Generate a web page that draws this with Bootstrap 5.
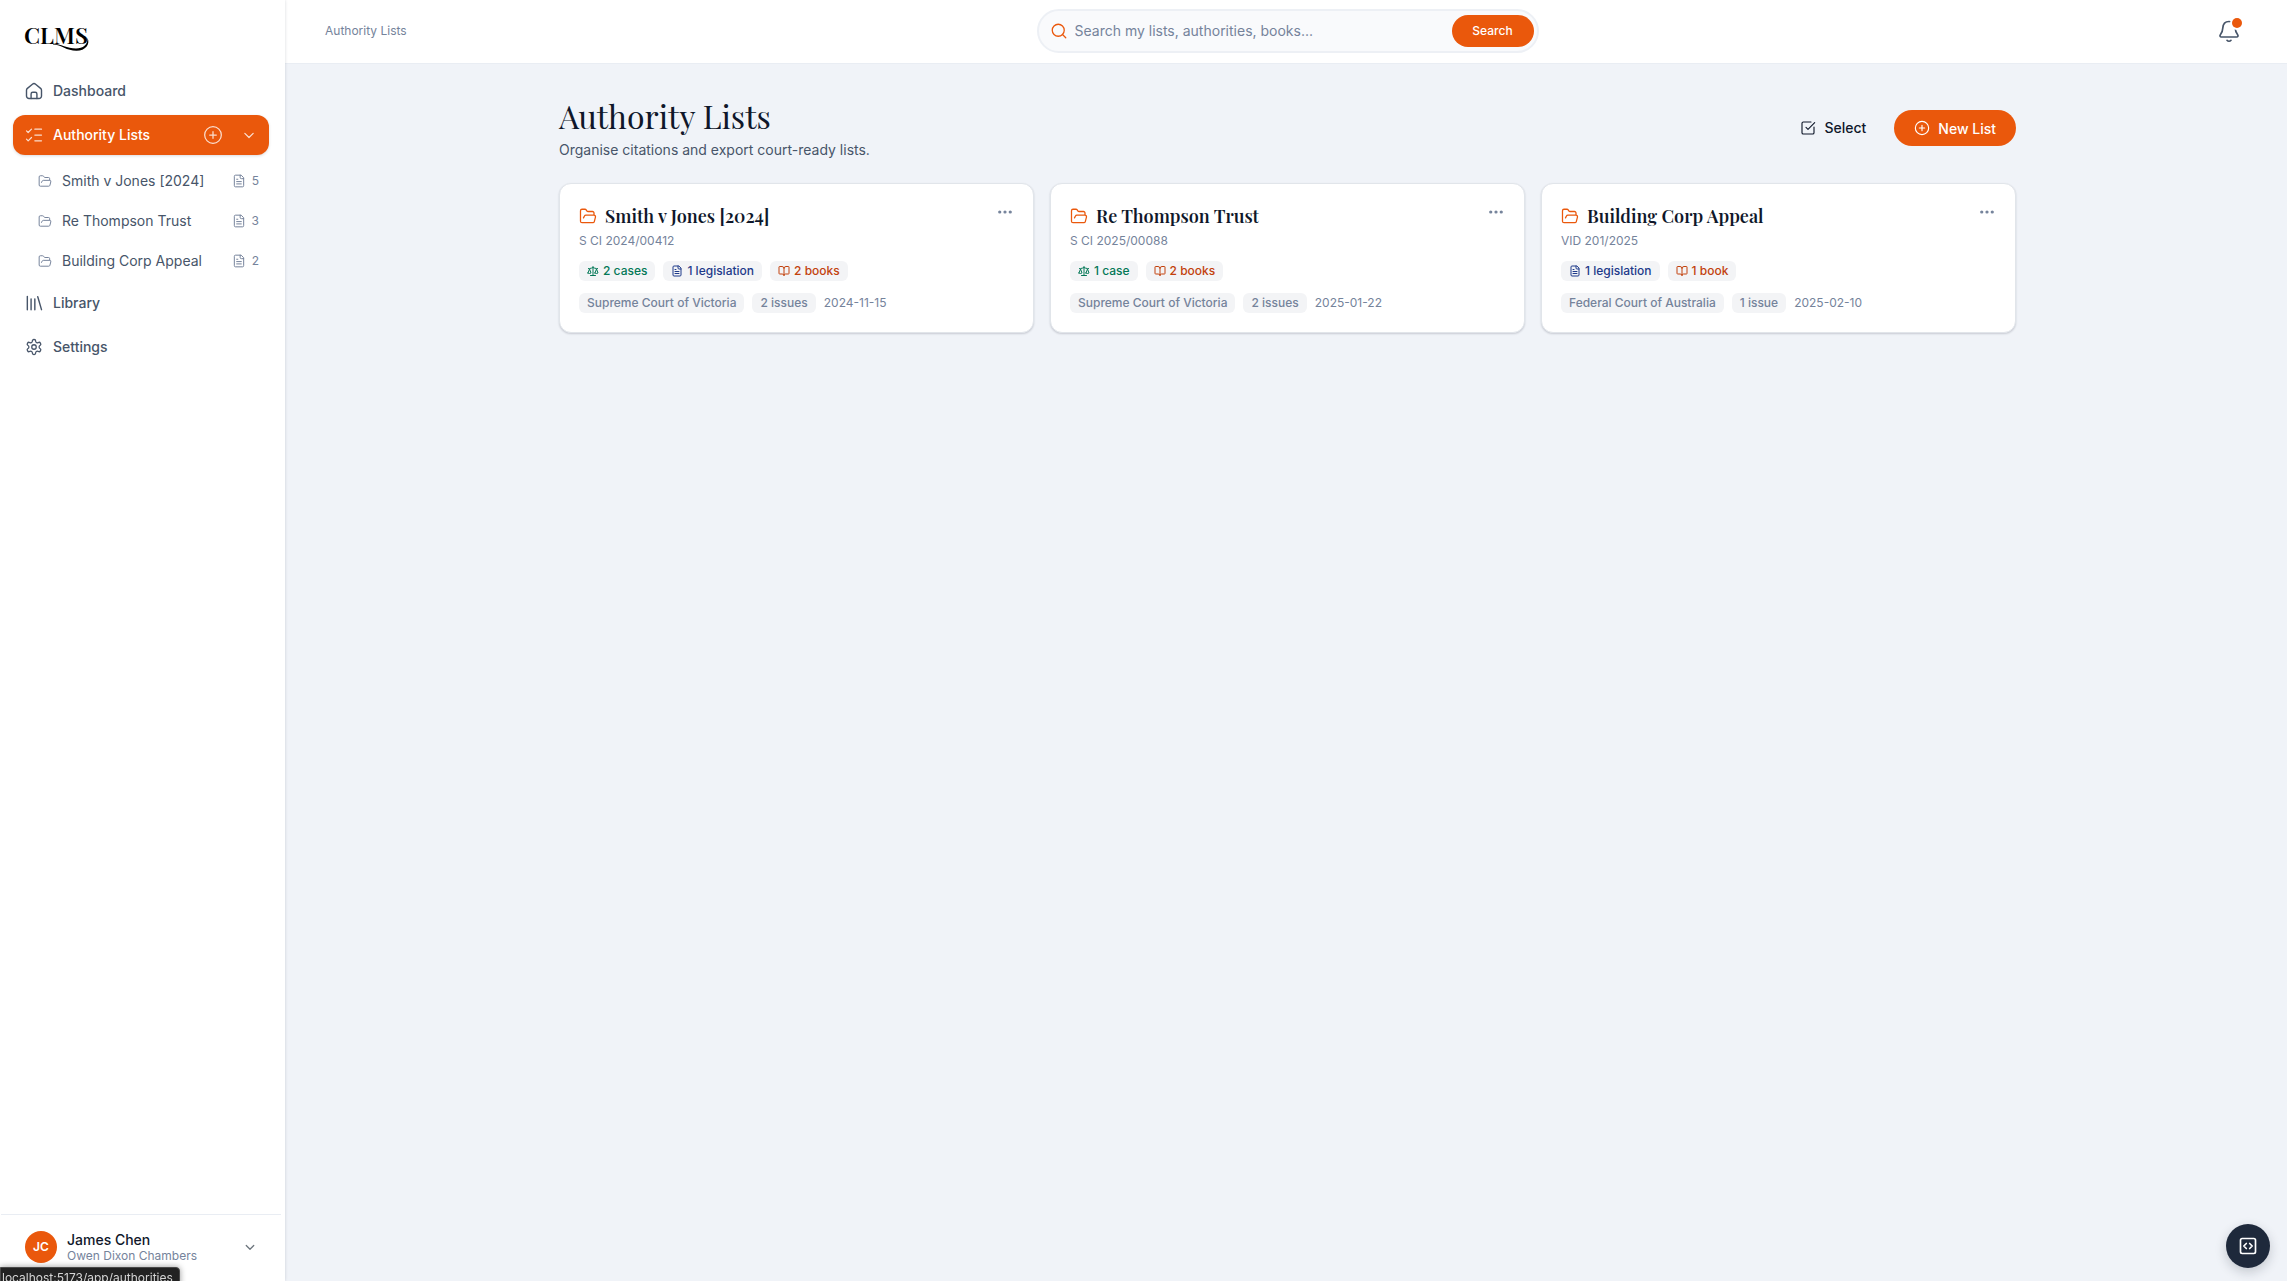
<!DOCTYPE html>
<html lang="en">
<head>
<meta charset="utf-8">
<meta name="viewport" content="width=device-width, initial-scale=1">
<title>Authority Lists</title>
<link href="https://cdn.jsdelivr.net/npm/bootstrap@5.3.0/dist/css/bootstrap.min.css" rel="stylesheet">
<style>
  :root { --brand: #ea580c; --ink: #0f172a; --slate: #475569; --dim: #75839b; --page: #f0f3f8; }
  body { font-family: Inter, "Liberation Sans", sans-serif; font-size: 14px; line-height: 20px; color: var(--ink); background: var(--page); }
  a { text-decoration: none; color: inherit; }
  .ico { width: 20px; height: 20px; fill: none; stroke: currentColor; stroke-width: 1.7; stroke-linecap: round; stroke-linejoin: round; flex: none; display: block; }
  .ico-24 { width: 24px; height: 24px; }
  .ico-18 { width: 18px; height: 18px; }
  .ico-16 { width: 16px; height: 16px; }
  .ico-14 { width: 14px; height: 14px; }
  .ico-cog { margin: 0 1px; }
  .ico-search { color: var(--brand); }
  .plain-btn { border: 0; background: none; padding: 0; color: inherit; }
  .serif { font-family: "Playfair Display", "Liberation Serif", serif; }

  .side { width: 285px; background: #fff; box-shadow: 0 0 3px rgba(15,23,42,.16); z-index: 2; }
  .brand-link { padding: 12px 24px 0; height: 71px; }
  .brand-link svg { overflow: visible; }
  .side-nav { padding: 0 16px 0 13px; gap: 4px; }
  .side-row { height: 40px; padding: 0 10px 0 11px; color: var(--slate); font-weight: 500; border-radius: 12px; }
  .side-row a { gap: 9px; }
  .side-row.is-current { background: var(--brand); color: #fff; box-shadow: 0 1px 3px rgba(15,23,42,.15); }
  .side-row.is-current .ico { opacity: .8; stroke-width: 1.5; }
  .sub-nav { margin-top: 4px; gap: 4px; }
  .sub-row { height: 36px; padding: 0 10px 0 25px; gap: 10px; color: var(--slate); }
  .sub-count { gap: 6px; color: var(--dim); font-size: 12px; }
  .sub-row .ico { color: var(--dim); }
  .account { margin: 0 4px 0 1px; padding: 16px 22px 18px 24px; border-top: 1px solid #e9edf3 !important; gap: 10px; height: 67px; }
  .avatar { width: 32px; height: 32px; background: var(--brand); color: #fff; font-size: 12px; font-weight: 600; }
  .account-name { font-weight: 500; line-height: 18px; }
  .account-org { font-size: 12px; line-height: 14px; color: var(--dim); }

  .top { height: 64px; background: #fff; padding: 0 37px 1px 40px; border-bottom: 1px solid #e9edf3; }
  .top-side { flex: 1 1 0; }
  .crumb { font-size: 12px; color: var(--dim); }
  .search-box { flex: 0 1 502px; height: 44px; border: 2px solid #edf0f5; border-radius: 22px; background: #f9fafc; padding: 0 3px 0 11px; gap: 7px; }
  .search-box input { border: 0; background: none; padding: 0; font-size: 14px; line-height: 20px; color: var(--ink); outline: 0; min-width: 0; }
  .search-box input::placeholder { color: var(--dim); opacity: 1; }
  .btn-brand, .btn-brand:hover { background: var(--brand); color: #fff; border: 0; font-weight: 500; }
  .btn-search { width: 82px; height: 32px; font-size: 12px; padding: 0; }
  .bell-btn { padding: 0 9px; color: var(--slate); }
  .bell-dot { width: 10px; height: 10px; background: var(--brand); top: -1px; right: 8px; box-shadow: 0 0 0 2px #fff; }

  .content { max-width: 1457px; width: 100%; margin: 0 auto; }
  .content-wrap { padding: 32px 24px 0 27px; }
  .page-title { font-size: 32px; line-height: 40px; font-weight: 400; margin: 0; }
  .page-note { color: var(--slate); margin: 4px 0 0; }
  .page-head { margin-bottom: 23px; }
  .btn-new { height: 36px; padding: 0 20px; gap: 8px; font-size: 14px; }
  .btn-pick { height: 36px; gap: 8px; font-weight: 500; margin-right: 28px; }

  .list-grid { --bs-gutter-x: 16px; --bs-gutter-y: 16px; }
  .list-card { border: 1px solid #e1e5ea; border-radius: 12px; padding: 19px; box-shadow: 0 1px 2px rgba(15,23,42,.18); background: #fff; }
  .list-title { font-size: 18px; line-height: 26px; font-weight: 600; margin: 0; }
  .title-row { gap: 8px; color: var(--brand); }
  .title-row a { color: var(--ink); }
  .list-ref { font-size: 12px; line-height: 18px; margin: 3px 0 11px; color: var(--dim); }
  .tag-row { gap: 8px; font-size: 12px; color: var(--dim); }
  .tag { height: 20px; padding: 0 8px; gap: 4px; border-radius: 6px; background: #f3f4f6; font-weight: 500; }
  .tag .ico { width: 12px; height: 12px; stroke-width: 2; }
  .tag-case { color: #047857; }
  .tag-law { color: #1e3a8a; }
  .tag-book { color: #c2410c; }
  .more-btn { top: 19px; right: 19px; color: var(--dim); }

  .dev-fab { right: 17px; bottom: 13px; width: 44px; height: 44px; background: #1e293b; color: #fff; box-shadow: 0 4px 12px rgba(15,23,42,.2); z-index: 5; }
  .dev-fab .ico { stroke-width: 2; }
  .link-status { left: 0; bottom: -6px; height: 20px; padding: 0 6px 0 1px; background: #222; border: 1px solid #4a4a4a; border-radius: 0 4px 0 0; color: #d4d4d4; font-size: 12px; line-height: 19px; box-shadow: 0 0 6px rgba(0,0,0,.4); z-index: 5; }
</style>
</head>
<body>
<svg class="d-none" xmlns="http://www.w3.org/2000/svg">
  <symbol id="i-home" viewBox="0 0 24 24"><path d="M3 11.2a3 3 0 0 1 1.1-2.3l6-5a3 3 0 0 1 3.8 0l6 5a3 3 0 0 1 1.1 2.3V18a3 3 0 0 1-3 3H6a3 3 0 0 1-3-3z"/><path d="M8.500 21v-5.500a2 2 0 0 1 2-2h3a2 2 0 0 1 2 2V21"/></symbol>
  <symbol id="i-checks" viewBox="0 0 24 24"><path d="m3 17 2 2 4-4M3 7l2 2 4-4M13 5h8M13 12h8M13 19h8"/></symbol>
  <symbol id="i-plus" viewBox="0 0 24 24"><circle cx="12" cy="12" r="10"/><path d="M8 12h8M12 8v8"/></symbol>
  <symbol id="i-down" viewBox="0 0 24 24"><path d="m7 10 5 5 5-5"/></symbol>
  <symbol id="i-folder" viewBox="0 0 24 24"><path d="M6 14.500 7.300 12a2 2 0 0 1 1.800-1.100H20a2 2 0 0 1 1.940 2.500l-1.540 6a2 2 0 0 1-1.950 1.500H4a2 2 0 0 1-2-2V5a2 2 0 0 1 2-2h3.900a2 2 0 0 1 1.690.900l.810 1.200a2 2 0 0 0 1.670.900H18a2 2 0 0 1 2 2v2.500"/></symbol>
  <symbol id="i-file" viewBox="0 0 24 24"><path d="M15 2H6a2 2 0 0 0-2 2v16a2 2 0 0 0 2 2h12a2 2 0 0 0 2-2V7z"/><path d="M14 2v4a2 2 0 0 0 2 2h4M10 9H8M16 13H8M16 17H8"/></symbol>
  <symbol id="i-library" viewBox="0 0 24 24"><path d="m16.500 4.500 4.500 15.500M13 7v13M8.500 7v13M4 4v16"/></symbol>
  <symbol id="i-cog" viewBox="0 0 24 24"><path d="M12.220 2h-.440a2 2 0 0 0-2 2v.180a2 2 0 0 1-1 1.730l-.430.250a2 2 0 0 1-2 0l-.150-.080a2 2 0 0 0-2.730.730l-.220.380a2 2 0 0 0 .730 2.730l.150.100a2 2 0 0 1 1 1.720v.510a2 2 0 0 1-1 1.740l-.150.090a2 2 0 0 0-.730 2.730l.220.380a2 2 0 0 0 2.730.730l.150-.080a2 2 0 0 1 2 0l.430.250a2 2 0 0 1 1 1.730V20a2 2 0 0 0 2 2h.440a2 2 0 0 0 2-2v-.180a2 2 0 0 1 1-1.730l.430-.250a2 2 0 0 1 2 0l.150.080a2 2 0 0 0 2.730-.730l.220-.390a2 2 0 0 0-.730-2.730l-.150-.080a2 2 0 0 1-1-1.740v-.500a2 2 0 0 1 1-1.740l.150-.090a2 2 0 0 0 .730-2.730l-.220-.380a2 2 0 0 0-2.730-.730l-.150.080a2 2 0 0 1-2 0l-.430-.250a2 2 0 0 1-1-1.730V4a2 2 0 0 0-2-2z"/><circle cx="12" cy="12" r="3"/></symbol>
  <symbol id="i-search" viewBox="0 0 24 24"><circle cx="11" cy="11" r="8"/><path d="m21 21-4.300-4.300"/></symbol>
  <symbol id="i-bell" viewBox="0 0 24 24"><path d="M12 2.500c-4 0-6 3-6.200 6.500-.2 3.500-.8 4.700-2.300 6.500-1 1.200-.5 2.500.9 2.500h15.200c1.400 0 1.900-1.300.9-2.500-1.500-1.800-2.100-3-2.300-6.500C18 5.500 16 2.500 12 2.500z"/><path d="M10 21.300a2.600 2.600 0 0 0 4 0"/></symbol>
  <symbol id="i-select" viewBox="0 0 24 24"><path d="M21 10.500V19a2 2 0 0 1-2 2H5a2 2 0 0 1-2-2V5a2 2 0 0 1 2-2h11.500"/><path d="m9 11 3 3L22 4"/></symbol>
  <symbol id="i-scale" viewBox="0 0 24 24"><path d="m16 16 3-8 3 8c-.870.650-1.920 1-3 1s-2.130-.350-3-1ZM2 16l3-8 3 8c-.870.650-1.920 1-3 1s-2.130-.350-3-1ZM7 21h10M12 3v18M3 7h2c2 0 5-1 7-2 2 1 5 2 7 2h2"/></symbol>
  <symbol id="i-book" viewBox="0 0 24 24"><path d="M12 7v14M3 18a1 1 0 0 1-1-1V4a1 1 0 0 1 1-1h5a4 4 0 0 1 4 4 4 4 0 0 1 4-4h5a1 1 0 0 1 1 1v13a1 1 0 0 1-1 1h-6a3 3 0 0 0-3 3 3 3 0 0 0-3-3z"/></symbol>
  <symbol id="i-code" viewBox="0 0 24 24"><rect x="3" y="3" width="18" height="18" rx="2"/><path d="m10 9-3 3 3 3M14 15l3-3-3-3"/></symbol>
  <symbol id="i-more" viewBox="0 0 24 24"><g fill="currentColor"><circle cx="5" cy="12" r="1.300"/><circle cx="12" cy="12" r="1.300"/><circle cx="19" cy="12" r="1.300"/></g></symbol>
</svg>

<div class="d-flex min-vh-100">
  <aside class="side d-flex flex-column flex-shrink-0 position-sticky top-0 vh-100">
    <a href="#" class="brand-link d-block" aria-label="CLMS home">
      <svg width="80" height="48" viewBox="0 0 80 48" aria-hidden="true">
        <text class="serif" x="0" y="32" font-size="23" font-weight="600" fill="#000">CLMS</text>
        <path d="M29 31.500c8 .6 14 5 23 5 7 0 12-4 11.500-10.500 3 6-2 12.800-11 12.800-10 0-15-6-23.500-6.300z" fill="#000"/>
      </svg>
    </a>
    <nav class="side-nav d-flex flex-column flex-grow-1" aria-label="Main">
      <div class="side-row d-flex align-items-center"><a href="#" class="d-flex align-items-center flex-grow-1"><svg class="ico"><use href="#i-home"/></svg>Dashboard</a></div>
      <div class="side-row is-current d-flex align-items-center gap-3">
        <a href="#" class="d-flex align-items-center flex-grow-1" aria-current="page"><svg class="ico"><use href="#i-checks"/></svg>Authority Lists</a>
        <button type="button" class="plain-btn" aria-label="Add list"><svg class="ico"><use href="#i-plus"/></svg></button>
        <button type="button" class="plain-btn" aria-label="Collapse"><svg class="ico"><use href="#i-down"/></svg></button>
      </div>
      <div class="sub-nav d-flex flex-column">
        <a href="#" class="sub-row d-flex align-items-center"><svg class="ico ico-14"><use href="#i-folder"/></svg><span class="flex-grow-1">Smith v Jones [2024]</span><span class="sub-count d-flex align-items-center"><svg class="ico ico-14"><use href="#i-file"/></svg>5</span></a>
        <a href="#" class="sub-row d-flex align-items-center"><svg class="ico ico-14"><use href="#i-folder"/></svg><span class="flex-grow-1">Re Thompson Trust</span><span class="sub-count d-flex align-items-center"><svg class="ico ico-14"><use href="#i-file"/></svg>3</span></a>
        <a href="#" class="sub-row d-flex align-items-center"><svg class="ico ico-14"><use href="#i-folder"/></svg><span class="flex-grow-1">Building Corp Appeal</span><span class="sub-count d-flex align-items-center"><svg class="ico ico-14"><use href="#i-file"/></svg>2</span></a>
      </div>
      <div class="side-row d-flex align-items-center"><a href="#" class="d-flex align-items-center flex-grow-1"><svg class="ico"><use href="#i-library"/></svg>Library</a></div>
      <div class="side-row d-flex align-items-center"><a href="#" class="d-flex align-items-center flex-grow-1"><svg class="ico ico-18 ico-cog"><use href="#i-cog"/></svg>Settings</a></div>
    </nav>
    <button type="button" class="account plain-btn d-flex align-items-start text-start">
      <span class="avatar rounded-circle d-flex align-items-center justify-content-center">JC</span>
      <span class="flex-grow-1"><span class="account-name d-block">James Chen</span><span class="account-org d-block">Owen Dixon Chambers</span></span>
      <svg class="ico ico-18 align-self-center text-secondary"><use href="#i-down"/></svg>
    </button>
  </aside>

  <div class="flex-grow-1 d-flex flex-column">
    <header class="top d-flex align-items-center">
      <nav class="top-side crumb" aria-label="Breadcrumb">Authority Lists</nav>
      <form class="search-box d-flex align-items-center" role="search">
        <svg class="ico ico-18 ico-search"><use href="#i-search"/></svg>
        <input type="search" class="flex-grow-1" placeholder="Search my lists, authorities, books..." aria-label="Search my lists, authorities, books">
        <button type="button" class="btn btn-brand btn-search rounded-pill">Search</button>
      </form>
      <div class="top-side d-flex justify-content-end">
        <button type="button" class="plain-btn bell-btn position-relative" aria-label="Notifications"><svg class="ico ico-24"><use href="#i-bell"/></svg><span class="bell-dot position-absolute rounded-circle"></span></button>
      </div>
    </header>

    <main class="content-wrap flex-grow-1">
      <div class="content">
        <div class="page-head d-flex align-items-center justify-content-between">
          <div>
            <h1 class="page-title serif">Authority Lists</h1>
            <p class="page-note">Organise citations and export court-ready lists.</p>
          </div>
          <div class="d-flex align-items-center">
            <button type="button" class="plain-btn btn-pick d-flex align-items-center"><svg class="ico ico-16"><use href="#i-select"/></svg>Select</button>
            <button type="button" class="btn btn-brand btn-new rounded-pill d-flex align-items-center"><svg class="ico ico-16"><use href="#i-plus"/></svg>New List</button>
          </div>
        </div>

        <div class="row row-cols-1 row-cols-lg-3 list-grid">
          <div class="col">
            <article class="list-card position-relative">
              <div class="title-row d-flex align-items-center"><svg class="ico ico-18"><use href="#i-folder"/></svg><h2 class="list-title serif"><a href="#">Smith v Jones [2024]</a></h2></div>
              <p class="list-ref">S CI 2024/00412</p>
              <div class="tag-row d-flex align-items-center mb-2 pb-1">
                <span class="tag tag-case d-flex align-items-center"><svg class="ico"><use href="#i-scale"/></svg>2 cases</span>
                <span class="tag tag-law d-flex align-items-center"><svg class="ico"><use href="#i-file"/></svg>1 legislation</span>
                <span class="tag tag-book d-flex align-items-center"><svg class="ico"><use href="#i-book"/></svg>2 books</span>
              </div>
              <div class="tag-row d-flex align-items-center"><span class="tag">Supreme Court of Victoria</span><span class="tag">2 issues</span><span>2024-11-15</span></div>
              <button type="button" class="more-btn plain-btn position-absolute" aria-label="More"><svg class="ico ico-18"><use href="#i-more"/></svg></button>
            </article>
          </div>
          <div class="col">
            <article class="list-card position-relative">
              <div class="title-row d-flex align-items-center"><svg class="ico ico-18"><use href="#i-folder"/></svg><h2 class="list-title serif"><a href="#">Re Thompson Trust</a></h2></div>
              <p class="list-ref">S CI 2025/00088</p>
              <div class="tag-row d-flex align-items-center mb-2 pb-1">
                <span class="tag tag-case d-flex align-items-center"><svg class="ico"><use href="#i-scale"/></svg>1 case</span>
                <span class="tag tag-book d-flex align-items-center"><svg class="ico"><use href="#i-book"/></svg>2 books</span>
              </div>
              <div class="tag-row d-flex align-items-center"><span class="tag">Supreme Court of Victoria</span><span class="tag">2 issues</span><span>2025-01-22</span></div>
              <button type="button" class="more-btn plain-btn position-absolute" aria-label="More"><svg class="ico ico-18"><use href="#i-more"/></svg></button>
            </article>
          </div>
          <div class="col">
            <article class="list-card position-relative">
              <div class="title-row d-flex align-items-center"><svg class="ico ico-18"><use href="#i-folder"/></svg><h2 class="list-title serif"><a href="#">Building Corp Appeal</a></h2></div>
              <p class="list-ref">VID 201/2025</p>
              <div class="tag-row d-flex align-items-center mb-2 pb-1">
                <span class="tag tag-law d-flex align-items-center"><svg class="ico"><use href="#i-file"/></svg>1 legislation</span>
                <span class="tag tag-book d-flex align-items-center"><svg class="ico"><use href="#i-book"/></svg>1 book</span>
              </div>
              <div class="tag-row d-flex align-items-center"><span class="tag">Federal Court of Australia</span><span class="tag">1 issue</span><span>2025-02-10</span></div>
              <button type="button" class="more-btn plain-btn position-absolute" aria-label="More"><svg class="ico ico-18"><use href="#i-more"/></svg></button>
            </article>
          </div>
        </div>
      </div>
    </main>
  </div>
</div>

<button type="button" class="dev-fab plain-btn rounded-circle position-fixed d-flex align-items-center justify-content-center" aria-label="Developer tools"><svg class="ico"><use href="#i-code"/></svg></button>
<div class="link-status position-fixed">localhost:5173/app/authorities</div>
<script src="https://cdn.jsdelivr.net/npm/bootstrap@5.3.0/dist/js/bootstrap.bundle.min.js"></script>
</body>
</html>
